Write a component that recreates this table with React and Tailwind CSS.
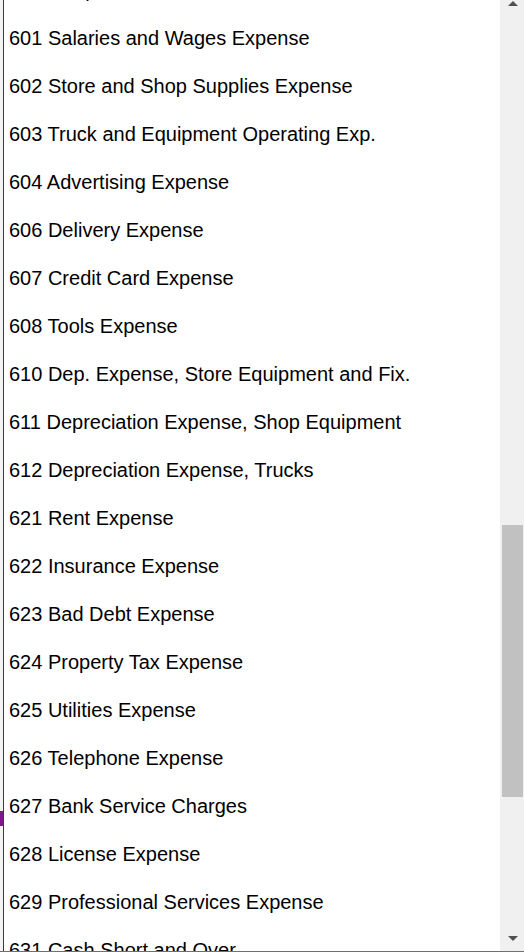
// Account picker dropdown, scrolled into the 600s.
const ACCOUNTS = [
  '600 Temp Labor',
  '601 Salaries and Wages Expense',
  '602 Store and Shop Supplies Expense',
  '603 Truck and Equipment Operating Exp.',
  '604 Advertising Expense',
  '606 Delivery Expense',
  '607 Credit Card Expense',
  '608 Tools Expense',
  '610 Dep. Expense, Store Equipment and Fix.',
  '611 Depreciation Expense, Shop Equipment',
  '612 Depreciation Expense, Trucks',
  '621 Rent Expense',
  '622 Insurance Expense',
  '623 Bad Debt Expense',
  '624 Property Tax Expense',
  '625 Utilities Expense',
  '626 Telephone Expense',
  '627 Bank Service Charges',
  '628 License Expense',
  '629 Professional Services Expense',
  '631 Cash Short and Over',
  '632 Miscellaneous Expense',
];

function Arrow({ up }) {
  return (
    <svg width="10" height="5" viewBox="0 0 10 5" className="block">
      <path d={up ? 'M0 5 L5 0 L10 5 Z' : 'M0 0 L10 0 L5 5 Z'} fill="#505050" />
    </svg>
  );
}

export default function App() {
  return (
    <div className="flex h-[952px] w-[524px] overflow-hidden border-b border-[#6f6f6f] bg-white font-['Liberation_Sans',Arial,sans-serif]">
      {/* strip of the page behind the list */}
      <div className="flex w-[3px] shrink-0 flex-col bg-[#f3f3f3]">
        <div className="h-[811px]" />
        <div className="h-[15px] bg-[#7a1a86]" />
      </div>

      <div className="flex min-w-0 flex-1 border-l border-[#3a3a3a]">
        <ul className="min-w-0 flex-1 overflow-hidden">
          <div className="-mt-[34px]">
            {ACCOUNTS.map((a) => (
              <li key={a} className="flex h-[48px] items-center whitespace-nowrap pl-[5px] text-[20px] leading-[23px] text-black">
                {a}
              </li>
            ))}
          </div>
        </ul>

        {/* scrollbar */}
        <div className="flex w-[24px] shrink-0 flex-col bg-[#f0f0f0]">
          <div className="flex h-[6px] items-end justify-center pl-[1px]">
            <Arrow up />
          </div>
          <div className="h-[519px]" />
          <div className="ml-[2px] h-[272px] w-[21px] bg-[#c1c1c1]" />
          <div className="flex-1" />
          <div className="flex justify-center pl-[1px]">
            <Arrow />
          </div>
          <div className="h-[10px]" />
        </div>
      </div>
    </div>
  );
}
